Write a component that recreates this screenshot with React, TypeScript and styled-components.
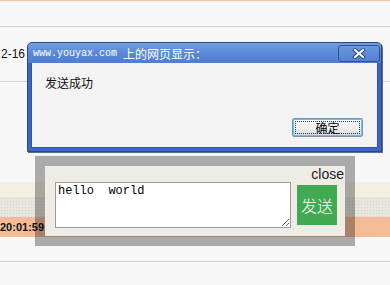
import React from 'react';
import styled, { createGlobalStyle } from 'styled-components';

const GlobalStyle = createGlobalStyle`
  html, body {
    margin: 0;
    padding: 0;
    background: #f7f7f7;
    font-family: 'Liberation Sans', Arial, 'Noto Sans CJK SC', sans-serif;
  }
`;

const Page = styled.div`
  position: relative;
  width: 390px;
  height: 285px;
  overflow: hidden;
  background: #f7f7f7;
`;

const TopLine = styled.div`
  height: 1px;
  background: #f5c4a2;
`;

const Row = styled.div<{ $h: number; $bg?: string; $line?: boolean }>`
  height: ${({ $h }) => $h}px;
  background: ${({ $bg }) => $bg || 'transparent'};
  border-bottom: ${({ $line }) => ($line ? '1px solid #d2d2d2' : 'none')};
  display: flex;
  align-items: center;
`;

const TexturedRow = styled(Row)`
  background-color: #e9e6e0;
  background-image: radial-gradient(#d6d3cc 0.7px, transparent 0.8px);
  background-size: 3px 3px;
`;

const Cell = styled.div<{ $bold?: boolean }>`
  padding-left: ${({ $bold }) => ($bold ? 0 : 1)}px;
  white-space: nowrap;
  font-size: ${({ $bold }) => ($bold ? 11 : 12)}px;
  font-weight: ${({ $bold }) => ($bold ? 'bold' : 'normal')};
  color: #111;
`;

/* alert dialog */
const Dialog = styled.div`
  position: absolute;
  left: 27px;
  top: 42px;
  width: 355px;
  height: 110px;
  box-sizing: border-box;
  border: 1px solid #2f4585;
  border-radius: 5px 5px 0 0;
  background: #3a66c6;
  padding: 0 3px 3px;
  display: flex;
  flex-direction: column;
  box-shadow: 1px 1px 0 #5c6a8c;
`;

const TitleBar = styled.div`
  height: 20px;
  margin: 0 -3px;
  padding: 0 1px 0 5px;
  border-radius: 4px 4px 0 0;
  background: linear-gradient(#729ee4, #5a88d8 50%, #4f7ed2);
  display: flex;
  align-items: center;
  color: #fff;
`;

const TitleUrl = styled.span`
  font-family: 'Liberation Mono', monospace;
  font-size: 10px;
  white-space: pre;
`;

const TitleCjk = styled.span`
  font-family: 'Noto Sans CJK SC', sans-serif;
  font-size: 12px;
  margin-left: 6px;
  flex: 1;
`;

const CloseX = styled.div`
  width: 42px;
  height: 17px;
  box-sizing: border-box;
  border: 1px solid #34518f;
  border-radius: 3px;
  background: linear-gradient(#6a97e0, #5281d6);
  display: flex;
  align-items: center;
  justify-content: center;
  margin-top: 1px;
`;

const Body = styled.div`
  flex: 1;
  background: #f3f3f3;
  border: 1px solid #2c52ad;
  border-top: none;
  padding: 12px 14px 10px 13px;
  display: flex;
  flex-direction: column;
`;

const Message = styled.div`
  font-family: 'Noto Sans CJK SC', sans-serif;
  font-size: 12px;
  line-height: 16px;
  color: #111;
  flex: 1;
`;

const OkButton = styled.button`
  align-self: flex-end;
  position: relative;
  width: 71px;
  height: 19px;
  padding: 0;
  border: 1px solid #7d94b6;
  border-radius: 2px;
  box-shadow: inset 0 0 0 1px #55c6f2;
  background: linear-gradient(#ffffff, #f0f0f0 55%, #d8d8d8);
  font-family: 'Noto Sans CJK SC', sans-serif;
  font-size: 12px;
  line-height: 17px;
  color: #000;
  &::after {
    content: '';
    position: absolute;
    inset: 2px;
    border: 1px dotted #333;
  }
`;

/* chat box */
const Overlay = styled.div`
  position: absolute;
  left: 35px;
  top: 156px;
  width: 320px;
  height: 90px;
  box-sizing: border-box;
  padding: 10px;
  background: rgba(0, 0, 0, 0.31);
`;

const Panel = styled.div`
  height: 70px;
  background: #efece6;
  display: flex;
  flex-direction: column;
`;

const CloseLink = styled.div`
  height: 16px;
  text-align: right;
  padding-right: 1px;
  font-size: 14px;
  line-height: 16px;
  color: #222;
`;

const InputRow = styled.div`
  display: flex;
  align-items: flex-start;
  padding-left: 10px;
`;

const Input = styled.textarea`
  width: 236px;
  height: 46px;
  box-sizing: border-box;
  margin: 0;
  border: 1px solid #9a9a9a;
  padding: 1px 2px;
  font-family: 'Liberation Mono', monospace;
  font-size: 12px;
  line-height: 14px;
  color: #000;
  background: #fff;
  resize: both;
  overflow: hidden;
  outline: none;
`;

const SendButton = styled.button`
  width: 40px;
  height: 40px;
  margin: 3px 0 0 6px;
  padding: 0;
  border: none;
  background: #40aa52;
  color: #fff;
  font-family: 'Noto Sans CJK SC', sans-serif;
  font-size: 16px;
  font-weight: 300;
`;

export default function App(): React.ReactElement {
  return (
    <Page>
      <GlobalStyle />
      <TopLine />
      <Row $h={25} $line />
      <Row $h={54} $line>
        <Cell>2-16</Cell>
      </Row>
      <Row $h={100} />
      <Row $h={15} $bg="#f4f0e1" />
      <TexturedRow $h={20} />
      <Row $h={20} $bg="#f4bc96">
        <Cell $bold>20:01:59</Cell>
      </Row>
      <Row $h={24} $line />

      <Dialog>
        <TitleBar>
          <TitleUrl>www.youyax.com</TitleUrl>
          <TitleCjk>上的网页显示：</TitleCjk>
          <CloseX>
            <svg width="14" height="11" viewBox="0 0 14 11">
              <path d="M3 2 L11 9 M11 2 L3 9" stroke="#2c4a8e" strokeWidth="4" strokeLinecap="square" />
              <path d="M3 2 L11 9 M11 2 L3 9" stroke="#ffffff" strokeWidth="2" strokeLinecap="square" />
            </svg>
          </CloseX>
        </TitleBar>
        <Body>
          <Message>发送成功</Message>
          <OkButton>确定</OkButton>
        </Body>
      </Dialog>

      <Overlay>
        <Panel>
          <CloseLink>close</CloseLink>
          <InputRow>
            <Input defaultValue="hello  world" />
            <SendButton>发送</SendButton>
          </InputRow>
        </Panel>
      </Overlay>
    </Page>
  );
}
